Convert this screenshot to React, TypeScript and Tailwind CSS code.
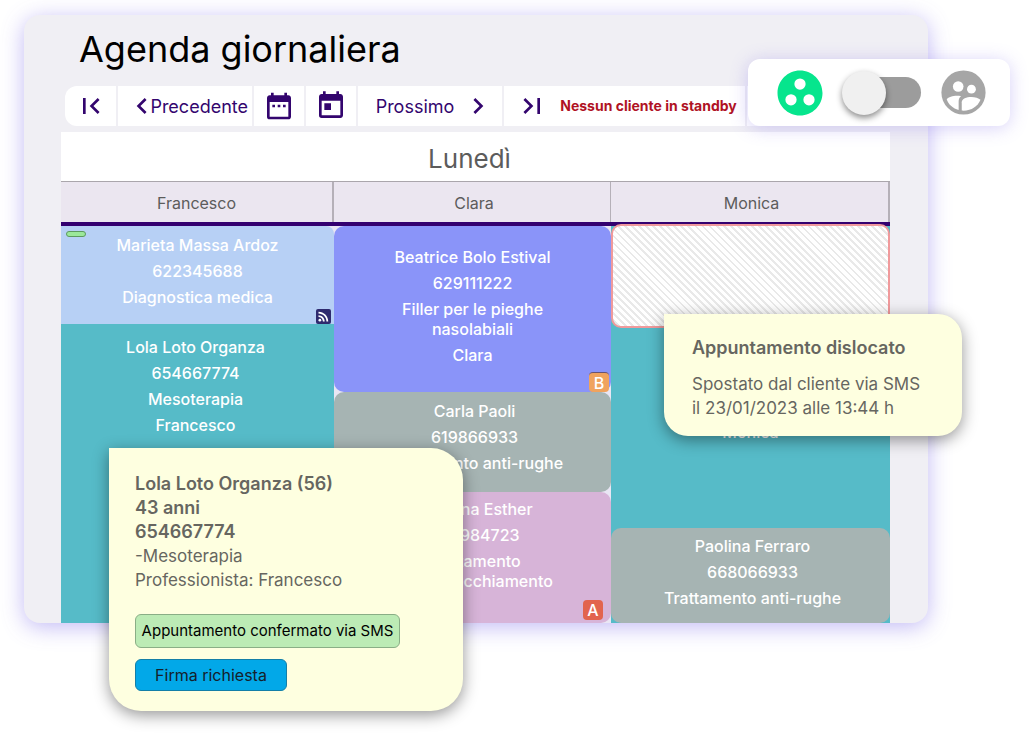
import React from "react";
import {
  MdChevronLeft,
  MdChevronRight,
  MdDateRange,
  MdFirstPage,
  MdGroupWork,
  MdLastPage,
  MdRssFeed,
  MdToday,
} from "react-icons/md";

type AppointmentProps = {
  lines: string[][];
  className: string;
  children?: React.ReactNode;
};

function Appointment({ lines, className, children }: AppointmentProps) {
  return (
    <article
      className={`relative flex flex-col items-center gap-[6px] text-center text-base leading-5 font-medium text-white ${className}`}
    >
      {lines.map((group) => (
        <p key={group[0]}>
          {group.map((line) => (
            <span key={line} className="block">
              {line}
            </span>
          ))}
        </p>
      ))}
      {children}
    </article>
  );
}

function Toolbar() {
  const cell = "flex items-center justify-center bg-white text-[#33056e]";
  return (
    <nav aria-label="Navigazione agenda" className="mx-1 flex h-10 gap-[2px]">
      <button aria-label="Primo giorno" className={`${cell} w-[51px] rounded-l-xl`}>
        <MdFirstPage className="size-8" />
      </button>
      <button className={`${cell} w-[134px] justify-end pr-1 text-[18px]`}>
        <MdChevronLeft className="-mr-2 size-8" />
        Precedente
      </button>
      <button aria-label="Settimana" className={`${cell} w-[50px]`}>
        <MdDateRange className="size-8" />
      </button>
      <button aria-label="Oggi" className={`${cell} w-[50px]`}>
        <MdToday className="size-8" />
      </button>
      <button className={`${cell} w-[144px] gap-2 pl-[10px] text-[18px]`}>
        Prossimo
        <MdChevronRight className="size-8" />
      </button>
      <div className={`${cell} w-[241px] gap-3 pl-1`}>
        <button aria-label="Ultimo giorno">
          <MdLastPage className="size-8" />
        </button>
        <span className="text-sm font-bold whitespace-nowrap text-[#b01224]">
          Nessun cliente in standby
        </span>
      </div>
      <div className="flex-1 bg-white" />
    </nav>
  );
}

function Calendar() {
  return (
    <section aria-label="Lunedì" className="mt-[6px] bg-white">
      <h2 className="flex h-[49px] items-center justify-center pt-1 pr-3 text-[26px] text-[#5c5c5c]">
        Lunedì
      </h2>
      <div className="grid grid-cols-[273fr_277fr_279fr] border-t border-b-4 border-t-[#aaa6ac] border-b-[#33006f] bg-[#ebe6f0] text-center text-base leading-10 text-[#5c5c5c]">
        <h3 className="h-10 border-r-2 border-[#b5b0b8] pt-px">Francesco</h3>
        <h3 className="h-10 border-r border-[#b5b0b8] pt-px pl-1">Clara</h3>
        <h3 className="h-10 border-r-2 border-[#b5b0b8] pt-px pl-1">Monica</h3>
      </div>
      <div className="grid grid-cols-[273fr_277fr_279fr] bg-[#e9e6f4]">
        <div className="flex flex-col">
          <Appointment
            className="h-[98px] rounded-tr-lg bg-[#b7d0f5] pt-[9px]"
            lines={[["Marieta Massa Ardoz"], ["622345688"], ["Diagnostica medica"]]}
          >
            <span className="absolute top-[5px] left-[5px] h-[6px] w-5 rounded-full border border-[#5c9a5e] bg-[#9be89a]" />
            <span className="absolute right-[3px] bottom-0 flex size-[15px] items-center justify-center rounded-xs bg-[#2e2a6e]">
              <MdRssFeed className="size-[15px]" />
            </span>
          </Appointment>
          <Appointment
            className="flex-1 bg-[#56bbc8] pt-[13px] pr-1"
            lines={[["Lola Loto Organza"], ["654667774"], ["Mesoterapia"], ["Francesco"]]}
          />
        </div>
        <div className="flex flex-col">
          <Appointment
            className="h-[166px] rounded-[10px] bg-[#8a94f9] pt-[21px]"
            lines={[
              ["Beatrice Bolo Estival"],
              ["629111222"],
              ["Filler per le pieghe", "nasolabiali"],
              ["Clara"],
            ]}
          >
            <span className="absolute right-[2px] bottom-0 flex size-5 items-center justify-center rounded-sm border-t border-[#6b5470] bg-[#f0a35e]">
              B
            </span>
          </Appointment>
          <Appointment
            className="h-[100px] rounded-[10px] bg-[#a6b4b3] pt-[9px] pl-1"
            lines={[["Carla Paoli"], ["619866933"], ["Trattamento anti-rughe"]]}
          />
          <Appointment
            className="h-[131px] rounded-[10px] bg-[#d7b4d8] pt-[7px] pl-1"
            lines={[["Carolina Esther"], ["654984723"], ["Trattamento", "anti-invecchiamento"]]}
          >
            <span className="absolute right-2 bottom-[3px] flex size-5 items-center justify-center rounded-sm bg-[#e2644e]">
              A
            </span>
          </Appointment>
        </div>
        <div className="flex flex-col bg-[#56bbc8]">
          <div className="-mt-[2px] h-[104px] rounded-[10px] border-2 border-[#f09a9c] bg-[repeating-linear-gradient(45deg,#ffffff_0px,#ffffff_3px,#e9e9e9_3px,#e9e9e9_5px)]" />
          <Appointment className="flex-1 bg-[#56bbc8] pt-[94px]" lines={[["Monica"]]} />
          <Appointment
            className="h-[95px] rounded-[10px] bg-[#a6b4b3] pt-2 pl-1"
            lines={[["Paolina Ferraro"], ["668066933"], ["Trattamento anti-rughe"]]}
          />
        </div>
      </div>
    </section>
  );
}

function PeopleIcon() {
  return (
    <svg viewBox="0 0 24 24" className="size-[53px]" aria-hidden="true">
      <circle cx="12" cy="12" r="10" fill="#a6a6a6" />
      <g fill="#ffffff">
        <circle cx="9.6" cy="9.3" r="2.4" />
        <circle cx="15.6" cy="10.5" r="2" />
        <path d="M4.4 15.1C5.4 13.8 8.4 13.2 10.9 13.7C10.1 14.3 9.8 15.1 9.8 16.1V19.9C7.3 19.3 5.2 17.6 4.4 15.1Z" />
        <path d="M11.2 20.2V16.4C11.2 14.8 13.4 14 15.5 14C17.2 14 18.9 14.6 19.7 15.3C18.4 18.4 15.3 20.5 11.2 20.2Z" />
      </g>
    </svg>
  );
}

function ViewSwitch() {
  return (
    <div className="absolute top-11 -right-[82px] flex h-[67px] w-[262px] items-center justify-between rounded-xl bg-white pr-5 pl-[25px] shadow-[0_2px_18px_rgba(110,90,230,0.28)]">
      <MdGroupWork className="size-[54px] text-[#06e58d]" />
      <label className="relative flex h-[31px] w-[78px] items-center rounded-full">
        <input
          type="checkbox"
          role="switch"
          aria-label="Vista di gruppo"
          className="peer absolute inset-0 z-10 size-full cursor-pointer opacity-0"
        />
        <span className="ml-4 h-full flex-1 rounded-full bg-[#9c9c9c]" />
        <span className="absolute left-0 size-11 -translate-x-[1px] rounded-full bg-[#f0f0f0] shadow-[0_3px_6px_rgba(0,0,0,0.45)] peer-checked:translate-x-9" />
      </label>
      <PeopleIcon />
    </div>
  );
}

const noteClass =
  "absolute bg-[#feffe0] leading-6 text-[#666660] shadow-[0_4px_16px_rgba(0,0,0,0.42)]";

export default function App() {
  return (
    <main className="overflow-hidden bg-white pt-[15px] pr-[104px] pb-32 pl-6 font-['Inter','Liberation_Sans',sans-serif]">
      <div className="relative rounded-2xl bg-[#f0eff4] shadow-[0_4px_22px_rgba(110,90,230,0.42)]">
        <div className="overflow-hidden rounded-2xl pr-[38px] pl-[37px]">
          <h1 className="flex h-[71px] items-center pb-1 pl-[18px] text-[36px] text-black">
            Agenda giornaliera
          </h1>
          <Toolbar />
          <Calendar />
        </div>
        <ViewSwitch />
        <aside
          className={`${noteClass} top-[299px] -right-[34px] w-[298px] rounded-3xl rounded-tl-none px-7 pt-[22px] pb-4 text-[17px] whitespace-nowrap`}
        >
          <h4 className="mb-3 text-[18px] font-semibold">Appuntamento dislocato</h4>
          <p>
            Spostato dal cliente via SMS
            <br />
            il 23/01/2023 alle 13:44 h
          </p>
        </aside>
        <aside
          className={`${noteClass} top-[433px] left-[85px] w-[354px] rounded-[32px] rounded-tl-none px-[26px] pt-6 pb-5 text-[17px]`}
        >
          <div className="text-[18px] leading-6 font-semibold">
            <h4>Lola Loto Organza (56)</h4>
            <p>43 anni</p>
            <p>654667774</p>
          </div>
          <p>-Mesoterapia</p>
          <p>Professionista: Francesco</p>
          <p className="mt-[22px] flex h-[34px] w-[265px] items-center justify-center rounded-md border border-[#8aae86] bg-[#bcebb5] text-[15px] whitespace-nowrap text-black">
            Appuntamento confermato via SMS
          </p>
          <button className="mt-[11px] h-8 w-[152px] rounded-md border border-[#137fa8] bg-[#02a8e8] text-base text-[#15202b]">
            Firma richiesta
          </button>
        </aside>
      </div>
    </main>
  );
}
